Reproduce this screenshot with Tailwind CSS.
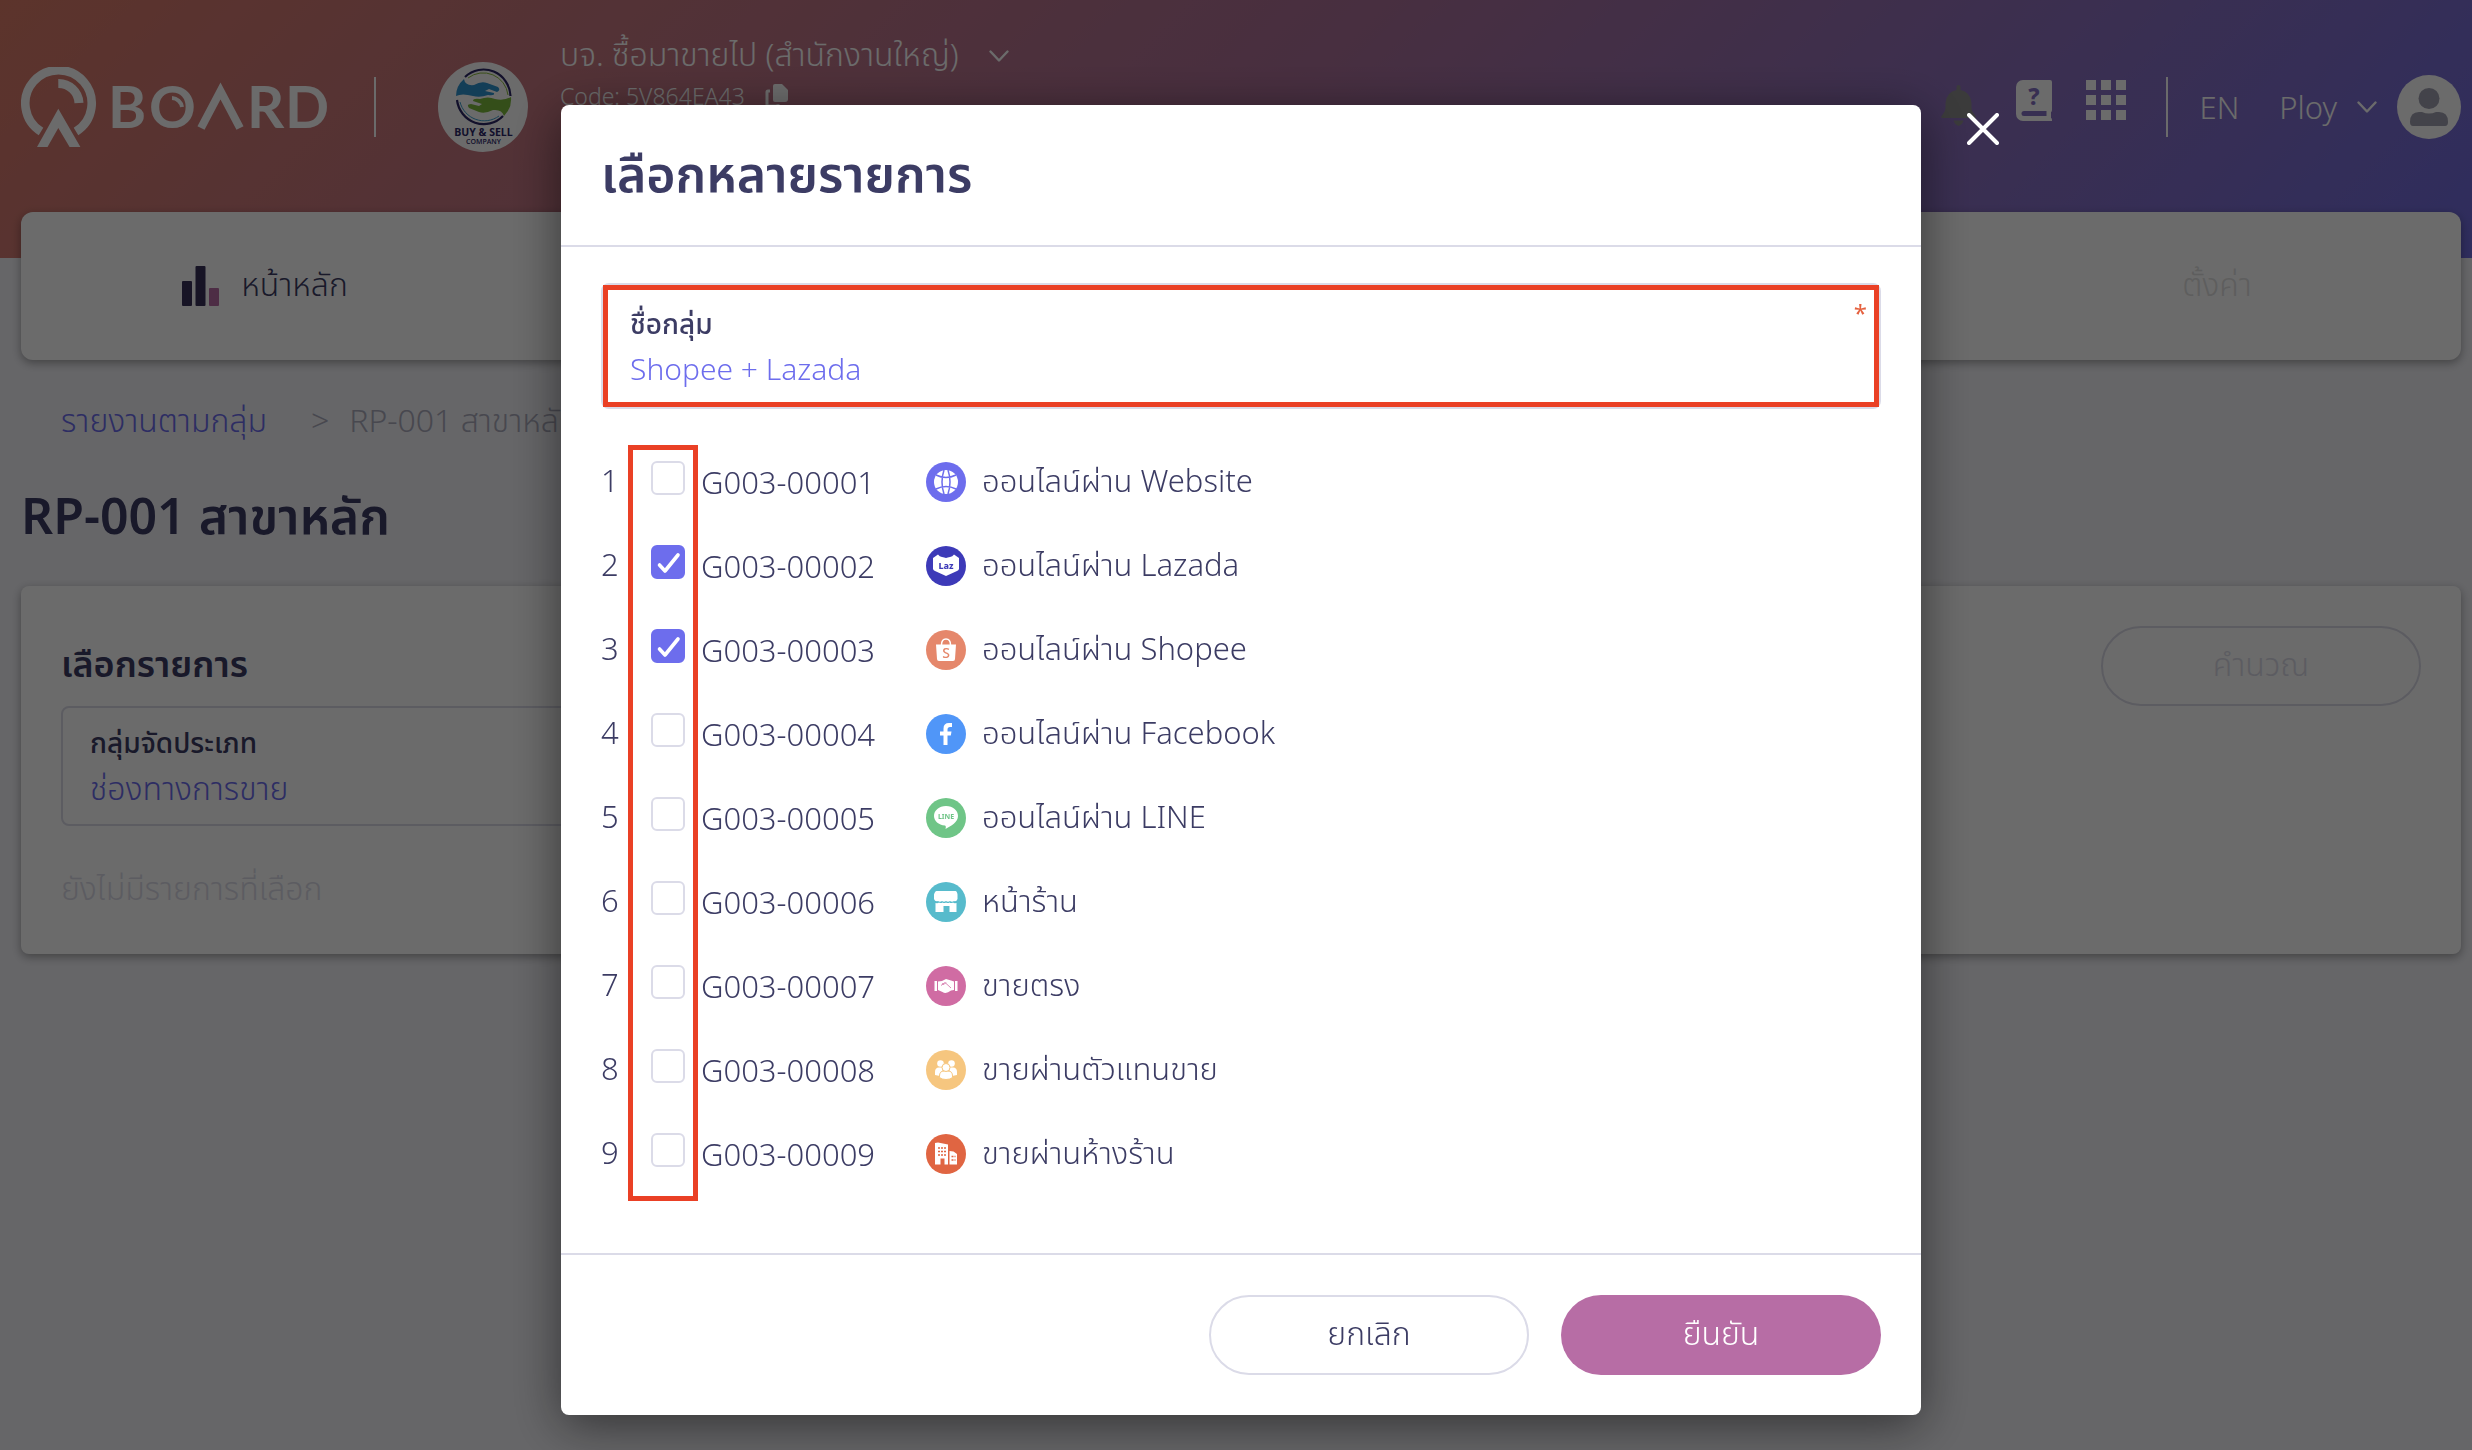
<!DOCTYPE html>
<html lang="th">
<head>
    <meta charset="UTF-8">
    <meta name="viewport" content="width=device-width, initial-scale=1.0">
    <title>QBoard</title>
    <script src="https://cdn.jsdelivr.net/npm/@tailwindcss/browser@4"></script>
</head>
<body class="min-h-screen bg-[#f3f3f8] font-['Noto_Sans','Noto_Sans_Thai',sans-serif] text-[32px] leading-10 font-light text-[#3c3c64]">

    <!-- Header -->
    <header class="h-[258px] bg-linear-135 from-[#dc7c68] via-[#ac7098] to-[#706cdf] pl-[21px] pr-[11px] text-white">
        <div class="flex h-[214px] items-center">
            <a href="#" class="flex items-center" aria-label="QBoard">
                <svg class="h-20 w-[312px]" viewBox="0 0 312 80" fill="none" stroke="#fff">
                    <path d="M20 64.5A33.2 33.2 0 1 1 55 64.5" stroke-width="8.6"/>
                    <path d="M37.3 16.5A20.5 20.5 0 0 1 58 36" stroke-width="9"/>
                    <path d="M37.3 41.7L59.4 80H48.6L37.3 61L26.5 80H16Z" fill="#fff" stroke="none"/>
                    <g fill="#fff" stroke="none" font-family="Lato" font-weight="700" font-size="58">
                        <text x="87" y="61">B</text>
                        <text x="128" y="61">O</text>
                        <text x="226" y="61">R</text>
                        <text x="264" y="61">D</text>
                    </g>
                    <path d="M180 61L199.500 24L219 61" stroke-width="8"/>
                    <path d="M151 31A10.500 10.500 0 0 1 161 40" stroke-width="4"/>
                </svg>
            </a>
            <div class="ml-[41px] h-[60px] w-[2px] bg-white"></div>
            <svg class="ml-[62px] size-[90px]" viewBox="0 0 90 90">
                <circle cx="45" cy="45" r="45" fill="#fff"/>
                <g fill="none">
                    <path d="M27 15A27 27.500 0 0 1 72.500 34" stroke="#2b2767" stroke-width="2.200"/>
                    <path d="M30 16A25 25 0 0 1 70 33" stroke="#8cbf3f" stroke-width="1"/>
                    <path d="M19 38A27 27.500 0 0 0 65 54" stroke="#2b2767" stroke-width="2.200"/>
                    <path d="M22 40A25 25 0 0 0 61 54" stroke="#3f9fd0" stroke-width="1"/>
                </g>
                <path d="M18 34Q18 24 26 17Q27 24 36 23Q43 19 49 21L60 25Q63 28 59 30L51 27L47 29L56 31Q57 34 50 33Q42 36 35 34Q24 31 18 34Z" fill="#2f93cf"/>
                <path d="M73 35Q74 46 66 54Q64 47 55 48Q47 52 41 50L31 46Q28 42 33 42L41 44L44 42L35 39Q35 36 42 37Q50 34 57 37Q66 39 73 35Z" fill="#7cb93c"/>
                <g fill="#2b2767" text-anchor="middle" font-family="Open Sans">
                    <text x="45.500" y="74" font-size="10.500" font-weight="700">BUY &amp; SELL</text>
                    <text x="45.500" y="82" font-size="7" font-weight="600">COMPANY</text>
                </g>
            </svg>
            <div class="ml-8 self-start pt-[34px]">
                <div class="flex items-center gap-[30px]">
                    <span>บจ. ซื้อมาขายไป (สำนักงานใหญ่)</span>
                    <svg class="mt-1 h-3 w-5" viewBox="0 0 20 12" fill="none" stroke="#fff" stroke-width="2.400" stroke-linecap="round" stroke-linejoin="round"><path d="M1.500 1.500L10 10.500L18.500 1.500"/></svg>
                </div>
                <div class="flex items-center gap-5 pt-[2px] text-[23px]">
                    <span>Code: 5V864EA43</span>
                    <svg class="size-6" viewBox="0 0 24 24" fill="#fff"><path d="M10 0h7l6 6v9a3 3 0 0 1-3 3H10a2 2 0 0 1-2-2V2a2 2 0 0 1 2-2z"/><path d="M5 7H3a1 1 0 0 0-1 1v13a1 1 0 0 0 1 1h10v-2" fill="none" stroke="#fff" stroke-width="3"/></svg>
                </div>
            </div>

            <div class="ml-auto flex items-center">
                <button aria-label="แจ้งเตือน" class="mt-[-4px]"><svg class="h-[41px] w-[35px]" viewBox="0 0 35 41" fill="#8d8d8d"><path d="M15.500 5V2a2 2 0 0 1 4 0v3q10 2 11 13v5q0 3 2.500 6l1.500 2q1 2-1 2H1.500q-2 0-1-2l1.500-2q2.500-3 2.500-6v-5Q5.500 7 15.500 5zM12.500 35.500h10q-1 4-5 5.500q-4-1.500-5-5.500z"/></svg></button>
                <button aria-label="คู่มือ" class="mt-[-14px] ml-10">
                    <svg class="h-[41px] w-9" viewBox="0 0 36 41">
                        <path d="M7 0h27a2 2 0 0 1 2 2v28q0 2-1 2v6q1 0 1 2v1H7a7 7 0 0 1-7-7V7a7 7 0 0 1 7-7z" fill="#fff"/>
                        <path d="M8 31h22.500v5H8a2.500 2.500 0 0 1 0-5z" fill="#8470c4"/>
                        <text x="18" y="25" text-anchor="middle" font-family="Noto Sans" font-weight="800" font-size="23" fill="#8470c4">?</text>
                    </svg>
                </button>
                <button aria-label="แอป" class="mt-[-14px] ml-[34px] grid grid-cols-3 gap-[5px]">
                    <span class="size-[10px] bg-white"></span><span class="size-[10px] bg-white"></span><span class="size-[10px] bg-white"></span>
                    <span class="size-[10px] bg-white"></span><span class="size-[10px] bg-white"></span><span class="size-[10px] bg-white"></span>
                    <span class="size-[10px] bg-white"></span><span class="size-[10px] bg-white"></span><span class="size-[10px] bg-white"></span>
                </button>
                <div class="ml-10 h-[60px] w-[2px] bg-white"></div>
                <a href="#" class="ml-8 text-[31px]">EN</a>
                <button class="ml-10 flex items-center gap-5 text-[31px]">
                    Ploy
                    <svg class="h-3 w-5" viewBox="0 0 20 12" fill="none" stroke="#fff" stroke-width="2.400" stroke-linecap="round" stroke-linejoin="round"><path d="M1.500 1.500L10 10.500L18.500 1.500"/></svg>
                </button>
                <svg class="ml-5 size-16" viewBox="0 0 64 64"><circle cx="32" cy="32" r="32" fill="#fff"/><circle cx="32" cy="23.500" r="10.500" fill="#a0a0b0"/><path d="M13 47q0-10 9-10h3q7 3 14 0h3q9 0 9 10q0 4-3 4H16q-3 0-3-4z" fill="#a0a0b0"/></svg>
            </div>
        </div>
    </header>

    <div class="-mt-[46px] pl-[21px] pr-[11px]">
        <!-- Main menu -->
        <nav class="grid h-[148px] grid-cols-5 items-center rounded-xl bg-white shadow-[0_3px_10px_rgba(0,0,0,0.35)]">
            <a href="#" class="flex items-center justify-center gap-[22px]">
                <svg class="h-10 w-[37px]" viewBox="0 0 37 40"><rect y="15" width="10" height="25" rx="1" fill="#37305a"/><rect x="13.500" width="10" height="40" rx="1" fill="#37305a"/><rect x="27" y="22" width="10" height="18" rx="1" fill="#b76da5"/></svg>
                <span class="pb-1">หน้าหลัก</span>
            </a>
            <a href="#" class="col-start-5 pb-1 text-center text-[#e0e0e0]">ตั้งค่า</a>
        </nav>

        <!-- Breadcrumb -->
        <div class="mt-10 flex items-center pl-10">
            <a href="#" class="text-[#6d6ded]">รายงานตามกลุ่ม</a>
            <span class="ml-11 text-[#ababbc]">&gt;</span>
            <span class="ml-5 text-[#ababbc]">RP-001 สาขาหลัก</span>
        </div>
        <h1 class="mt-11 text-[50px] leading-[62px] font-semibold">RP-001 สาขาหลัก</h1>

        <!-- Report items -->
        <section class="mt-10 flex h-[368px] items-start justify-between rounded-lg bg-white p-10 shadow-[0_3px_10px_rgba(0,0,0,0.35)]">
            <div class="w-1/2 pt-4">
                <h2 class="text-[36px] leading-11 font-semibold">เลือกรายการ</h2>
                <div class="mt-5 flex h-[120px] flex-col rounded-lg border-2 border-[#dbdbe8] px-[27px] pt-[14px]">
                    <span class="text-[28px] leading-10 font-medium">กลุ่มจัดประเภท</span>
                    <span class="mt-[6px] text-[#6d6ded]">ช่องทางการขาย</span>
                </div>
                <p class="mt-[42px] text-[#dbdbe8]">ยังไม่มีรายการที่เลือก</p>
            </div>
            <button class="h-20 w-80 rounded-full border-2 border-[#dbdbe8] pb-1 text-[#dbdbe8]">คำนวณ</button>
        </section>
    </div>

    <!-- Modal -->
    <div class="fixed inset-0 flex items-start justify-center bg-black/58 pt-[105px] pl-[21px] pr-[11px]">
        <div role="dialog" aria-labelledby="modal-title" class="relative w-full max-w-[1360px] rounded-lg bg-white shadow-[0_10px_50px_rgba(0,0,0,0.5)]">
            <button aria-label="ปิด" class="absolute top-2 left-full ml-[46px]">
                <svg class="size-8" viewBox="0 0 32 32" stroke="#fff" stroke-width="4" stroke-linecap="round"><path d="M2 2L30 30M30 2L2 30"/></svg>
            </button>

            <div class="border-b-2 border-[#dbdbe8] px-10 pt-[38px] pb-[42px]">
                <h3 id="modal-title" class="text-[50px] leading-[60px] font-semibold">เลือกหลายรายการ</h3>
            </div>

            <div class="px-10 pt-9 pb-[34px]">
                <div class="relative mb-9 h-[126px] rounded-lg border-2 border-[#dbdbe8] px-[27px] pt-[18px]">
                    <label for="group-name" class="block text-[28px] leading-10 font-medium">ชื่อกลุ่ม</label>
                    <input id="group-name" type="text" value="Shopee + Lazada" class="mt-[6px] block h-10 w-full text-[30px] text-[#6d6ded] outline-none">
                    <span class="absolute top-2 right-3 text-[24px] leading-10 font-normal text-[#e5613f]">*</span>
                    <div class="pointer-events-none absolute inset-0 border-[5px] border-[#ea4025]"></div>
                </div>

                <div class="relative">
                    <ul id="channels"></ul>
                    <div class="pointer-events-none absolute inset-y-0 left-[27px] w-[70px] border-[5px] border-[#ea4025]"></div>
                </div>
            </div>

            <div class="mt-[18px] flex justify-end gap-8 border-t-2 border-[#dbdbe8] p-10">
                <button class="h-20 w-80 rounded-full border-2 border-[#dbdbe8] pb-1">ยกเลิก</button>
                <button class="h-20 w-80 rounded-full bg-[#b76da5] pb-1 text-white">ยืนยัน</button>
            </div>
        </div>
    </div>

<script>
    const channels = [
        { name: 'ออนไลน์ผ่าน Website', color: '#6d6ded', icon: '<circle cx="20" cy="20" r="12" fill="#fff"/><g fill="none" stroke="#6d6ded" stroke-width="1.500"><path d="M18 8q-4 12 0 24M22 8q4 12 0 24M10 13q10 5 20 0M10 27q10-5 20 0"/></g>' },
        { name: 'ออนไลน์ผ่าน Lazada', color: '#3d3ab8', checked: true, icon: '<path d="M7 12l5-3.500q1.500 2 4 2.500t4 1q1.500-.5 4-1t4-2.500l5 3.500v11q-.5 1.500-2 2L20 30l-11-5q-1.500-.5-2-2z" fill="#fff"/><text x="20" y="22.500" text-anchor="middle" font-family="Noto Sans" font-weight="800" font-size="9" fill="#3d3ab8">Laz</text>' },
        { name: 'ออนไลน์ผ่าน Shopee', color: '#e5876b', checked: true, icon: '<path d="M15.500 15q0-6 4.500-6t4.500 6" fill="none" stroke="#fff" stroke-width="1.500"/><path d="M10 14.500h20l-1 14.500q0 2-2 2H13q-2 0-2-2z" fill="#fff"/><text x="20" y="28" text-anchor="middle" font-family="Noto Sans" font-weight="500" font-size="14" fill="#e5876b">S</text>' },
        { name: 'ออนไลน์ผ่าน Facebook', color: '#5096f8', icon: '<path d="M17.500 31v-9.500h-3.500v-4h3.500v-3q0-5.500 5.500-5.500h3v4h-2q-2.500 0-2.500 2.500v2h4l-.700 4h-3.300V31z" fill="#fff"/>' },
        { name: 'ออนไลน์ผ่าน LINE', color: '#6fc587', icon: '<path d="M20 8c7 0 12 4.500 12 10c0 6-7 10-12.500 13c.5-2 .5-3-.5-3.500C12.500 27 8 23 8 18C8 12.500 13 8 20 8z" fill="#fff"/><text x="20" y="20.500" text-anchor="middle" font-family="Noto Sans" font-weight="700" font-size="7" fill="#6fc587">LINE</text>' },
        { name: 'หน้าร้าน', color: '#57bbcc', icon: '<path d="M10.500 9h19q1.500 0 2 3.500v4.500q-1 3-3.500 2q-2 1.500-4 0q-2 1.500-4 0q-2 1.500-4 0q-2 1.500-4 0q-3 1-4-2v-4.500q1-3.500 2.500-3.500zM9.500 21q2.500.5 3.500-.5q2 1 3.500 0q1.500 1 3.500 0q2 1 3.500 0q1.500 1 3.500 0q1 1 3.500.5v9h-7v-6h-6v6h-8z" fill="#fff"/>' },
        { name: 'ขายตรง', color: '#d06ca3', icon: '<path d="M8.500 15h2.500v10h-2.500zM29 15h2.500v10h-2.500zM12 15.500l4-.5l4-2l5 1.500l3 1v8.500l-3 .5q-5 4-8.500 1.500l-4.500-2z" fill="#fff"/><path d="M15 19.500l4-3l6 5.500M16 17.500q2 2.500 4-1" fill="none" stroke="#d06ca3" stroke-width=".8"/>' },
        { name: 'ขายผ่านตัวแทนขาย', color: '#f6c67f', icon: '<g fill="#fff"><circle cx="14.500" cy="13.500" r="3.300"/><circle cx="25.500" cy="13.500" r="3.300"/><path d="M9 25v-3q0-4.500 4-4.500h3l1 6-3 2.500zM31 25v-3q0-4.500-4-4.500h-3l-1 6 3 2.500z"/><g stroke="#f6c67f" stroke-width="1"><path d="M13.500 26q0-5 4.500-5h4q4.500 0 4.500 5v1.500q-2 2-6.500 2t-6.500-2z"/><circle cx="20" cy="17.500" r="4"/></g></g>' },
        { name: 'ขายผ่านห้างร้าน', color: '#e06542', icon: '<path d="M9 9l3-.5l10 2v20h-3.500v-6h-4v6H9zM23.500 17l4 .5 3.500 2.500v10.500h-7.500z" fill="#fff"/><path d="M12 14h8M12 17.500h8M12 21h8M25.500 22.500h4M25.500 26h4" stroke="#e06542" stroke-width="1.600" stroke-dasharray="2 1"/>' },
    ];

    document.getElementById('channels').innerHTML = channels.map((c, i) => `
        <li class="flex h-[84px] items-center pb-[10px] text-[31px]">
            <span class="w-[50px] pb-1">${i + 1}</span>
            <span class="relative mb-2 size-[34px]">
                <input id="ch-${i}" type="checkbox" ${c.checked ? 'checked' : ''} class="peer block size-[34px] appearance-none rounded-md border-2 border-[#dbdbe8] bg-white checked:border-[#6d6ded] checked:bg-[#6d6ded]">
                <svg class="pointer-events-none absolute inset-0 hidden size-[34px] peer-checked:block" viewBox="0 0 34 34" fill="none" stroke="#fff" stroke-width="3.600" stroke-linecap="round" stroke-linejoin="round"><path d="M8.500 20L14 26L27 10"/></svg>
            </span>
            <label for="ch-${i}" class="ml-4 flex items-center">
                <span class="w-[225px]">G003-0000${i + 1}</span>
                <svg class="size-10" viewBox="0 0 40 40"><circle cx="20" cy="20" r="20" fill="${c.color}"/>${c.icon}</svg>
                <span class="ml-4 pb-1">${c.name}</span>
            </label>
        </li>`).join('');
</script>
</body>
</html>
